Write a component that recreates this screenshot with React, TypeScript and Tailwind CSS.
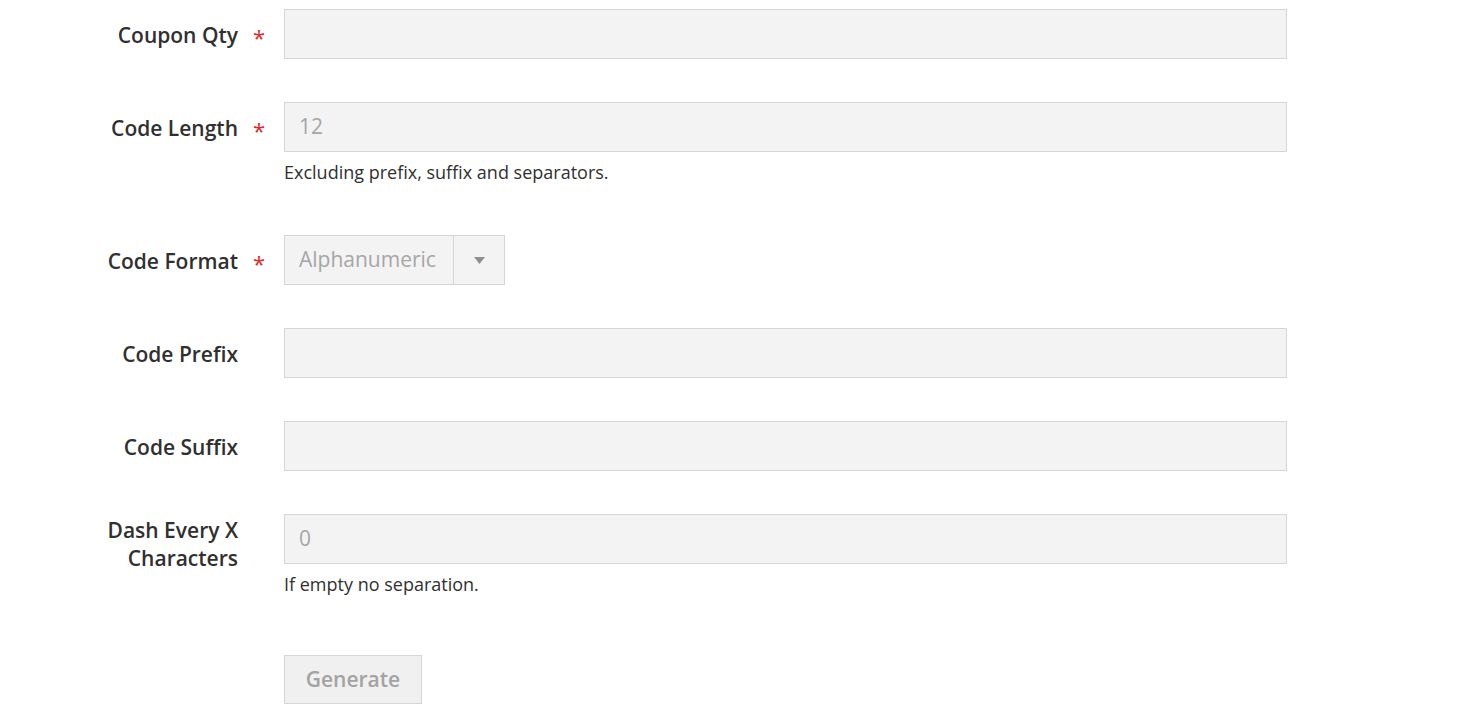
const font = { fontFamily: '"Open Sans", "Liberation Sans", sans-serif' };

type FieldProps = {
  label: React.ReactNode;
  required?: boolean;
  children: React.ReactNode;
  note?: string;
};

function Field({ label, required, children, note }: FieldProps) {
  return (
    <div className="flex items-start">
      <div className="flex w-[284px] shrink-0 items-start">
        <div className="ml-[100px] flex min-h-[50px] w-[138px] items-center justify-end pt-[2px] text-right text-[21px] font-semibold leading-[28px] text-[#303030]">
          {label}
        </div>
        <div className="flex h-[50px] w-[46px] items-center justify-center pr-[4px]">
          {required && (
            <span className="text-[22px] leading-none text-[#e22626] translate-y-[3px]">*</span>
          )}
        </div>
      </div>
      <div>
        {children}
        {note && (
          <div className="mt-[6px] text-[18px] leading-[28px] text-[#303030]">{note}</div>
        )}
      </div>
    </div>
  );
}

function TextInput({ value }: { value?: string }) {
  return (
    <div className="flex h-[50px] w-[1003px] items-center border border-[#d6d6d6] bg-[#f3f3f3] px-[14px] text-[21px] text-[#a6a6a6]">
      {value}
    </div>
  );
}

export default function App() {
  return (
    <div className="min-h-screen bg-white pt-[9px]" style={font}>
      <div className="mb-[43px]">
        <Field label="Coupon Qty" required>
          <TextInput />
        </Field>
      </div>

      <div className="mb-[49px]">
        <Field label="Code Length" required note="Excluding prefix, suffix and separators.">
          <TextInput value="12" />
        </Field>
      </div>

      <div className="mb-[43px]">
        <Field label="Code Format" required>
          <div className="flex h-[50px] w-[221px] border border-[#d6d6d6] bg-[#f3f3f3] text-[21px] text-[#a6a6a6]">
            <div className="flex flex-1 items-center px-[14px]">Alphanumeric</div>
            <div className="flex w-[51px] items-center justify-center border-l border-[#d6d6d6]">
              <svg width="11" height="7" viewBox="0 0 11 7">
                <path d="M0 0h11L5.5 7z" fill="#8f8f8f" />
              </svg>
            </div>
          </div>
        </Field>
      </div>

      <div className="mb-[43px]">
        <Field label="Code Prefix">
          <TextInput />
        </Field>
      </div>

      <div className="mb-[43px]">
        <Field label="Code Suffix">
          <TextInput />
        </Field>
      </div>

      <div className="mb-[57px]">
        <Field label="Dash Every X Characters" note="If empty no separation.">
          <TextInput value="0" />
        </Field>
      </div>

      <div className="pl-[284px]">
        <button
          type="button"
          disabled
          className="h-[49px] w-[138px] border border-[#d6d6d6] bg-[#f0f0f0] text-[21px] font-semibold text-[#a3a3a3]"
        >
          Generate
        </button>
      </div>
    </div>
  );
}
